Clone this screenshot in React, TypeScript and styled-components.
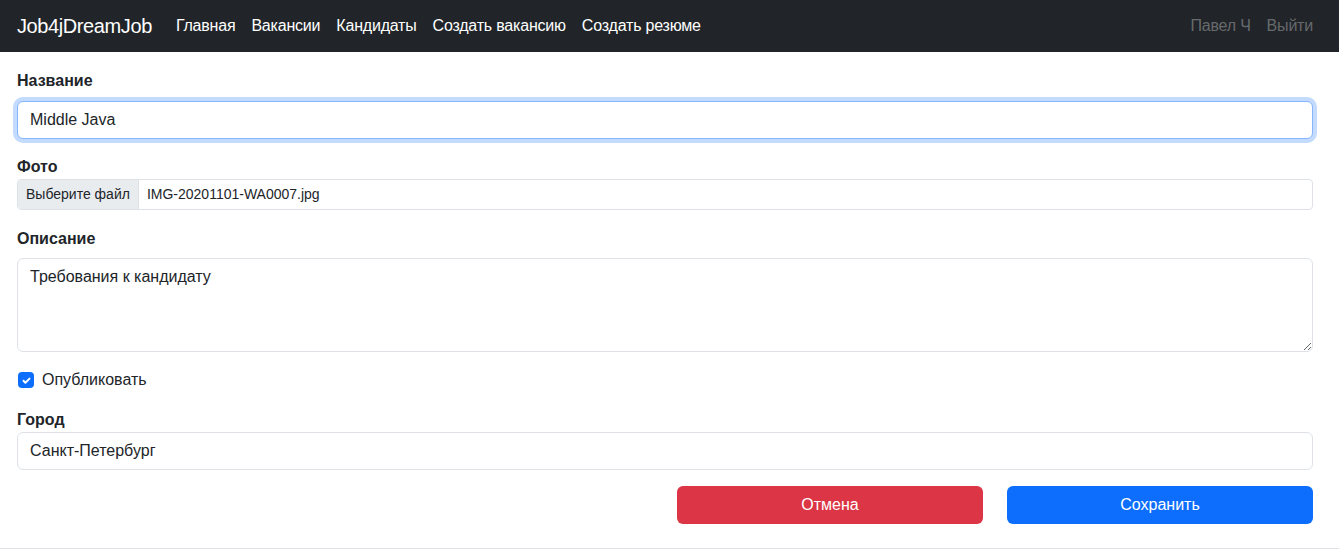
import React, { useState } from 'react';
import styled, { createGlobalStyle } from 'styled-components';

const GlobalStyle = createGlobalStyle`
  * { box-sizing: border-box; }
  body {
    margin: 0;
    font-family: "Segoe UI", "Liberation Sans", "Noto Sans", sans-serif;
    font-size: 16px;
    line-height: 1.5;
    color: #212529;
    background: #fff;
  }
`;

const Navbar = styled.nav`
  height: 52px;
  background-color: #212529;
  display: flex;
  align-items: center;
  padding: 0 26px 0 17px;
`;

const Brand = styled.a`
  font-size: 20px;
  letter-spacing: -0.4px;
  color: #fff;
  margin-right: 16px;
  text-decoration: none;
  white-space: nowrap;
`;

const NavList = styled.div<{ $end?: boolean }>`
  display: flex;
  margin-left: ${p => (p.$end ? 'auto' : '0')};
`;

const NavLink = styled.a<{ $muted?: boolean }>`
  padding: 8px;
  letter-spacing: -0.2px;
  color: ${p => (p.$muted ? 'rgba(255, 255, 255, 0.33)' : '#fff')};
  text-decoration: none;
  white-space: nowrap;
  &:last-child { padding-right: 0; }
`;

const Form = styled.form`
  padding: 17px 26px 0 17px;
  display: flex;
  flex-direction: column;
`;

const Group = styled.div<{ $gap?: number }>`
  display: flex;
  flex-direction: column;
  margin-bottom: ${p => p.$gap ?? 16}px;
`;

const Label = styled.label<{ $space?: number }>`
  font-weight: 700;
  margin-bottom: ${p => p.$space ?? 8}px;
  line-height: 24px;
`;

const TextInput = styled.input<{ $focused?: boolean }>`
  height: 38px;
  padding: 6px 12px;
  font: inherit;
  color: #212529;
  border: 1px solid ${p => (p.$focused ? '#86b7fe' : '#dee2e6')};
  border-radius: 6px;
  outline: none;
  box-shadow: ${p => (p.$focused ? '0 0 0 4px rgba(13, 110, 253, 0.25)' : 'none')};
`;

const FileBox = styled.div`
  display: flex;
  height: 31px;
  border: 1px solid #dee2e6;
  border-radius: 4px;
  overflow: hidden;
  font-size: 14px;
  align-items: stretch;
`;

const FileButton = styled.span`
  display: flex;
  align-items: center;
  padding: 0 8px;
  background: #e9ecef;
  border-right: 1px solid #dee2e6;
  color: #212529;
`;

const FileName = styled.span`
  display: flex;
  align-items: center;
  padding: 0 8px;
`;

const TextArea = styled.textarea`
  height: 94px;
  padding: 6px 12px;
  font: inherit;
  color: #212529;
  border: 1px solid #dee2e6;
  border-radius: 6px;
  resize: vertical;
  outline: none;
`;

const CheckRow = styled.label`
  display: flex;
  align-items: center;
  gap: 8px;
  height: 24px;
  margin-bottom: 16px;
`;

const CheckBox = styled.span`
  width: 16px;
  height: 16px;
  margin-left: 1px;
  border-radius: 4px;
  background: #0d6efd;
  display: flex;
  align-items: center;
  justify-content: center;
`;

const Actions = styled.div`
  display: grid;
  grid-template-columns: repeat(4, 1fr);
  column-gap: 24px;
`;

const Button = styled.button<{ $variant: 'danger' | 'primary'; $col: number }>`
  grid-column: ${p => p.$col};
  height: 38px;
  border: none;
  border-radius: 6px;
  font: inherit;
  color: #fff;
  background: ${p => (p.$variant === 'danger' ? '#dc3545' : '#0d6efd')};
  cursor: pointer;
`;

const Footer = styled.footer`
  margin-top: 24px;
  border-top: 1px solid #dee2e6;
  height: 6px;
`;

export default function App() {
  const [name, setName] = useState('Middle Java');
  const [desc, setDesc] = useState('Требования к кандидату');
  const [city, setCity] = useState('Санкт-Петербург');

  return (
    <>
      <GlobalStyle />
      <Navbar>
        <Brand href="#">Job4jDreamJob</Brand>
        <NavList>
          <NavLink href="#">Главная</NavLink>
          <NavLink href="#">Вакансии</NavLink>
          <NavLink href="#">Кандидаты</NavLink>
          <NavLink href="#">Создать вакансию</NavLink>
          <NavLink href="#">Создать резюме</NavLink>
        </NavList>
        <NavList $end>
          <NavLink $muted href="#">Павел Ч</NavLink>
          <NavLink $muted href="#">Выйти</NavLink>
        </NavList>
      </Navbar>
      <Form onSubmit={e => e.preventDefault()}>
        <Group>
          <Label $space={8}>Название</Label>
          <TextInput $focused value={name} onChange={e => setName(e.target.value)} />
        </Group>
        <Group $gap={17}>
          <Label $space={0}>Фото</Label>
          <FileBox>
            <FileButton>Выберите файл</FileButton>
            <FileName>IMG-20201101-WA0007.jpg</FileName>
          </FileBox>
        </Group>
        <Group $gap={16}>
          <Label $space={7}>Описание</Label>
          <TextArea value={desc} onChange={e => setDesc(e.target.value)} />
        </Group>
        <CheckRow>
          <CheckBox>
            <svg width="11" height="11" viewBox="0 0 20 20">
              <path d="M4.5 10.5l3.5 3.5L15.5 6.5" fill="none" stroke="#fff" strokeWidth="3.5" strokeLinecap="round" strokeLinejoin="round" />
            </svg>
          </CheckBox>
          Опубликовать
        </CheckRow>
        <Group>
          <Label $space={0}>Город</Label>
          <TextInput value={city} onChange={e => setCity(e.target.value)} />
        </Group>
        <Actions>
          <Button type="button" $variant="danger" $col={3}>Отмена</Button>
          <Button type="submit" $variant="primary" $col={4}>Сохранить</Button>
        </Actions>
      </Form>
      <Footer />
    </>
  );
}
